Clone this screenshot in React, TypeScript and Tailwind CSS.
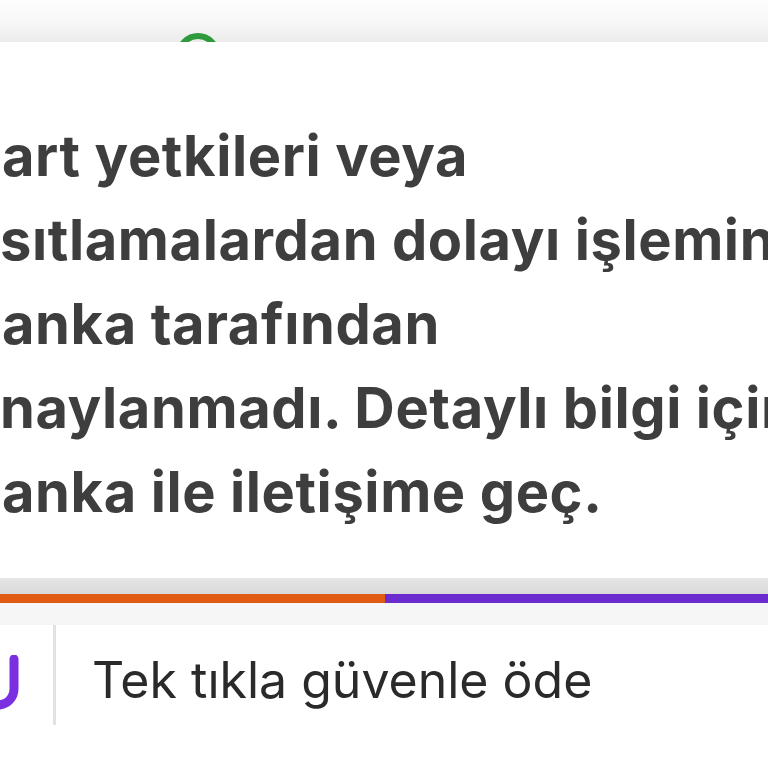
import React from "react";

const lines = [
  { text: "art yetkileri veya", ml: "ml-[2px]" },
  { text: "sıtlamalardan dolayı işlemin", ml: "ml-[0px]" },
  { text: "anka tarafından", ml: "ml-[2px]" },
  { text: "naylanmadı. Detaylı bilgi için", ml: "ml-[0px]" },
  { text: "anka ile iletişime geç.", ml: "ml-[2px]" },
];

export default function App() {
  return (
    <div className="w-[768px] h-[768px] overflow-hidden bg-white font-['Inter','Noto_Sans',sans-serif]">
      <div className="relative h-[42px] overflow-hidden bg-gradient-to-b from-[#fdfdfd] via-[#f8f8f8] to-[#ebebeb]">
        <svg className="absolute left-[174px] top-[31px]" width="48" height="48" viewBox="0 0 48 48">
          <circle cx="24" cy="24" r="19" fill="none" stroke="#2f9a3c" strokeWidth="6" />
        </svg>
      </div>

      <div className="bg-white pt-[72px] pb-[44px] overflow-hidden">
        {lines.map((l) => (
          <div
            key={l.text}
            className={`${l.ml} whitespace-nowrap text-[56px] leading-[84px] font-bold text-[#3e3e3e] tracking-[0.6px]`}
          >
            {l.text}
          </div>
        ))}
      </div>

      <div className="h-[16px] bg-gradient-to-b from-[#e6e6e6] to-[#d9d9d9]" />
      <div className="flex h-[9px]">
        <div className="w-[385px] bg-[#e05c14]" />
        <div className="flex-1 bg-[#6a2bcf]" />
      </div>
      <div className="h-[22px] bg-[#f6f6f6]" />

      <div className="flex items-center h-[110px]">
        <div className="relative w-[53px] h-full overflow-hidden">
          <svg className="absolute -left-[24px] top-[30px]" width="44" height="60" viewBox="0 0 44 60">
            <path d="M6 4 V34 A16 16 0 0 0 38 34 V4" fill="none" stroke="#7a2fe0" strokeWidth="9" strokeLinecap="round" />
          </svg>
        </div>
        <div className="w-[3px] h-[100px] bg-[#e2e2e2] self-start" />
        <div className="ml-[36px] text-[50px] text-[#2a2a2a] whitespace-nowrap">Tek tıkla güvenle öde</div>
      </div>
    </div>
  );
}
